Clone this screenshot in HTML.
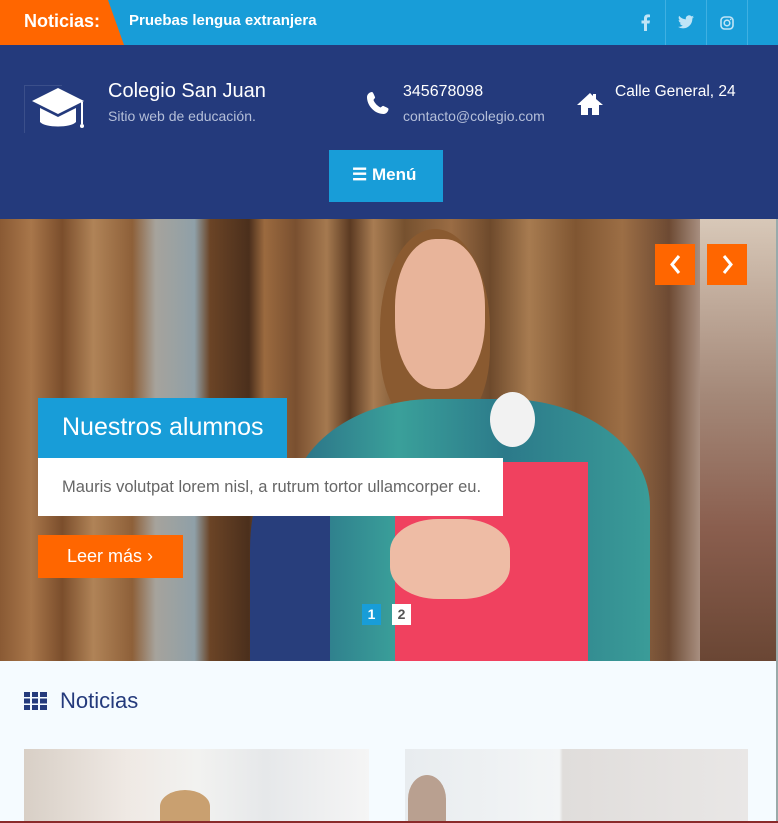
<!DOCTYPE html>
<html><head><meta charset="utf-8"><style>
*{margin:0;padding:0;box-sizing:border-box}
body{width:778px;height:823px;overflow:hidden;font-family:"Liberation Sans",sans-serif;background:#f5fbff;position:relative}
.abs{position:absolute}
.top{left:0;top:0;width:778px;height:45px;background:#189dd8}
.nt{left:0;top:0;width:124px;height:45px;background:#ff6600;clip-path:polygon(0 0,108px 0,124px 45px,0 45px)}
.hdr{left:0;top:45px;width:778px;height:174px;background:#243a7c}
.t{color:#fff;white-space:nowrap}
.hero{left:0;top:219px;width:778px;height:442px;overflow:hidden;background:linear-gradient(90deg,#8a5a34 0,#a8764a 4%,#7b4e2c 8%,#b08357 12%,#8e6039 17%,#a6a39c 20%,#8fa0a8 25%,#6b4426 27%,#4b2f1c 32%,#9b6a3f 34%,#7a5030 38%,#a5794f 42%,#5b3a22 45%,#a87c52 48%,#76512f 52%,#9a6c44 58%,#6e4a2c 63%,#a77b50 68%,#805632 74%,#9c6e45 80%,#6d4a33 86%,#a88f80 90%,#8b6e66 95%,#7a5a4e 100%)}
</style></head><body>
<div class="abs top"></div>
<div class="abs nt"></div>
<div class="abs t" style="left:24px;top:11px;font-size:18px;font-weight:bold">Noticias:</div>
<div class="abs t" style="left:129px;top:12px;font-size:15px;font-weight:bold">Pruebas lengua extranjera</div>
<div class="abs" style="left:665px;top:0;width:1px;height:45px;background:#3fb0e2"></div>
<div class="abs" style="left:706px;top:0;width:1px;height:45px;background:#3fb0e2"></div>
<div class="abs" style="left:747px;top:0;width:1px;height:45px;background:#3fb0e2"></div>
<svg class="abs" style="left:641px;top:14px" width="9" height="17" viewBox="0 0 9 17"><path fill="#bfe4f6" d="M6 17V9.5h2.5L9 6.5H6V4.8c0-.9.3-1.5 1.5-1.5H9V.6C8.7.5 7.8.4 6.8.4 4.6.4 3 1.8 3 4.3v2.2H.5v3H3V17z"/></svg>
<svg class="abs" style="left:678px;top:15px" width="16" height="14" viewBox="0 0 24 20"><path fill="#bfe4f6" d="M24 2.4a10 10 0 0 1-2.8.8A5 5 0 0 0 23.3.4a10 10 0 0 1-3.1 1.2A4.9 4.9 0 0 0 11.8 6 14 14 0 0 1 1.7.9a4.9 4.9 0 0 0 1.5 6.6 4.9 4.9 0 0 1-2.2-.6 4.9 4.9 0 0 0 3.9 4.8 4.9 4.9 0 0 1-2.2.1 4.9 4.9 0 0 0 4.6 3.4A9.9 9.9 0 0 1 0 17.3 14 14 0 0 0 7.5 19.5c9 0 14-7.5 14-14v-.6A10 10 0 0 0 24 2.4z"/></svg>
<svg class="abs" style="left:720px;top:16px" width="14" height="14" viewBox="0 0 14 14"><rect x="1" y="1" width="12" height="12" rx="3.5" fill="none" stroke="#bfe4f6" stroke-width="1.6"/><circle cx="7" cy="7" r="2.8" fill="none" stroke="#bfe4f6" stroke-width="1.6"/><circle cx="10.6" cy="3.4" r=".8" fill="#bfe4f6"/></svg>
<div class="abs hdr"></div>
<div class="abs" style="left:24px;top:85px;width:38px;height:48px;border:1px solid #3b4f8a;border-right:none;border-bottom:none"></div>
<svg class="abs" style="left:28px;top:86px" width="60" height="46" viewBox="0 0 60 46"><path fill="#fff" d="M30 2 4 15l26 13 26-13z"/><path fill="#fff" d="M12 22v14c5 6 31 6 36 0V22L30 31z"/><path stroke="#fff" stroke-width="2" d="M54 16v22"/><circle cx="54" cy="40" r="2" fill="#fff"/></svg>
<div class="abs t" style="left:108px;top:80px;font-size:20px">Colegio San Juan</div>
<div class="abs" style="left:108px;top:108px;font-size:14px;color:#b5bfd9">Sitio web de educación.</div>
<svg class="abs" style="left:366px;top:91px" width="24" height="24" viewBox="0 0 24 24"><path fill="#fff" d="M6 1c1 0 2 3 3 5 .5 1-1 2-1.5 3 1 3 4 6 7 7.5 1-.5 2-2 3-1.5 2 1 5 2 5 3 0 2-2 5-5 5C9 23 1 15 1 6c0-3 3-5 5-5z"/></svg>
<div class="abs t" style="left:403px;top:83px;font-size:16px">345678098</div>
<div class="abs" style="left:403px;top:108px;font-size:14px;color:#b5bfd9">contacto@colegio.com</div>
<svg class="abs" style="left:576px;top:92px" width="28" height="24" viewBox="0 0 28 24"><path fill="#fff" d="M14 1 1 13h4v10h7v-7h4v7h7V13h4L20 7V2h-3v2z"/></svg>
<div class="abs t" style="left:615px;top:83px;font-size:15.5px">Calle General, 24</div>
<div class="abs" style="left:329px;top:150px;width:114px;height:52px;background:#189dd8"></div>
<div class="abs t" style="left:352px;top:165px;font-size:17px;font-weight:bold">☰ Menú</div>
<div class="abs hero">
 <div class="abs" style="left:380px;top:10px;width:110px;height:200px;border-radius:50% 50% 40% 40%;background:#8a5a30"></div>
 <div class="abs" style="left:395px;top:20px;width:90px;height:150px;border-radius:45%;background:#e8b49a"></div>
 <div class="abs" style="left:290px;top:180px;width:360px;height:270px;border-radius:40% 40% 0 0;background:linear-gradient(90deg,#2a6f86,#3aa09a 30%,#2c7a8a 60%,#3a9c98)"></div>
 <div class="abs" style="left:250px;top:250px;width:80px;height:200px;border-radius:40% 0 0 0;background:#283e7c"></div>
 <div class="abs" style="left:395px;top:243px;width:193px;height:200px;background:#f0415f"></div>
 <div class="abs" style="left:390px;top:300px;width:120px;height:80px;border-radius:40%;background:#eebca5"></div>
 <div class="abs" style="left:490px;top:173px;width:45px;height:55px;border-radius:50%;background:#f2f2f2"></div>
 <div class="abs" style="left:700px;top:0;width:78px;height:442px;background:linear-gradient(180deg,#d8c8b8,#a48878 40%,#8a5e4e 70%,#6a4634)"></div>
 <div class="abs" style="left:38px;top:179px;width:249px;height:60px;background:#189dd8"></div>
 <div class="abs t" style="left:62px;top:194px;font-size:25px">Nuestros alumnos</div>
 <div class="abs" style="left:38px;top:239px;width:465px;height:58px;background:#fff"></div>
 <div class="abs" style="left:62px;top:259px;font-size:16.5px;color:#666;white-space:nowrap">Mauris volutpat lorem nisl, a rutrum tortor ullamcorper eu.</div>
 <div class="abs" style="left:38px;top:316px;width:145px;height:43px;background:#ff6600"></div>
 <div class="abs t" style="left:67px;top:327px;font-size:18px">Leer más ›</div>
 <div class="abs" style="left:655px;top:25px;width:40px;height:41px;background:#ff6600"></div>
 <div class="abs" style="left:707px;top:25px;width:40px;height:41px;background:#ff6600"></div>
 <svg class="abs" style="left:655px;top:25px" width="92" height="41"><path d="M24 12l-7 8.5 7 8.5M69 12l7 8.5-7 8.5" fill="none" stroke="#fff" stroke-width="3"/></svg>
 <div class="abs" style="left:362px;top:385px;width:19px;height:21px;background:#189dd8;color:#fff;font-size:14px;font-weight:bold;text-align:center;line-height:21px">1</div>
 <div class="abs" style="left:392px;top:385px;width:19px;height:21px;background:#fff;color:#555;font-size:14px;font-weight:bold;text-align:center;line-height:21px">2</div>
</div>
<svg class="abs" style="left:24px;top:692px" width="24" height="18" viewBox="0 0 24 18"><g fill="#243a7c"><rect x="0" y="0" width="6" height="5"/><rect x="8" y="0" width="6" height="5"/><rect x="16" y="0" width="7" height="5"/><rect x="0" y="6.5" width="6" height="5"/><rect x="8" y="6.5" width="6" height="5"/><rect x="16" y="6.5" width="7" height="5"/><rect x="0" y="13" width="6" height="5"/><rect x="8" y="13" width="6" height="5"/><rect x="16" y="13" width="7" height="5"/></g></svg>
<div class="abs" style="left:60px;top:688px;font-size:22px;color:#243a7c">Noticias</div>
<div class="abs" style="left:24px;top:749px;width:345px;height:74px;background:linear-gradient(90deg,#d8cfc6 0,#efe9e4 30%,#f2f2f0 50%,#e6e8ea 70%,#f5f5f5)"></div>
<div class="abs" style="left:160px;top:790px;width:50px;height:33px;border-radius:50% 50% 0 0;background:#c9a070"></div>
<div class="abs" style="left:405px;top:749px;width:343px;height:74px;background:linear-gradient(90deg,#e8ecef 0,#f3f5f6 45%,#e0dddb 46%,#e9e7e6 100%)"></div>
<div class="abs" style="left:408px;top:775px;width:38px;height:48px;border-radius:50% 50% 0 0;background:#b9a090"></div>
<div class="abs" style="left:776px;top:219px;width:2px;height:604px;background:#9aa"></div>
<div class="abs" style="left:0;top:821px;width:778px;height:2px;background:#8a2a2a"></div>
</body></html>
